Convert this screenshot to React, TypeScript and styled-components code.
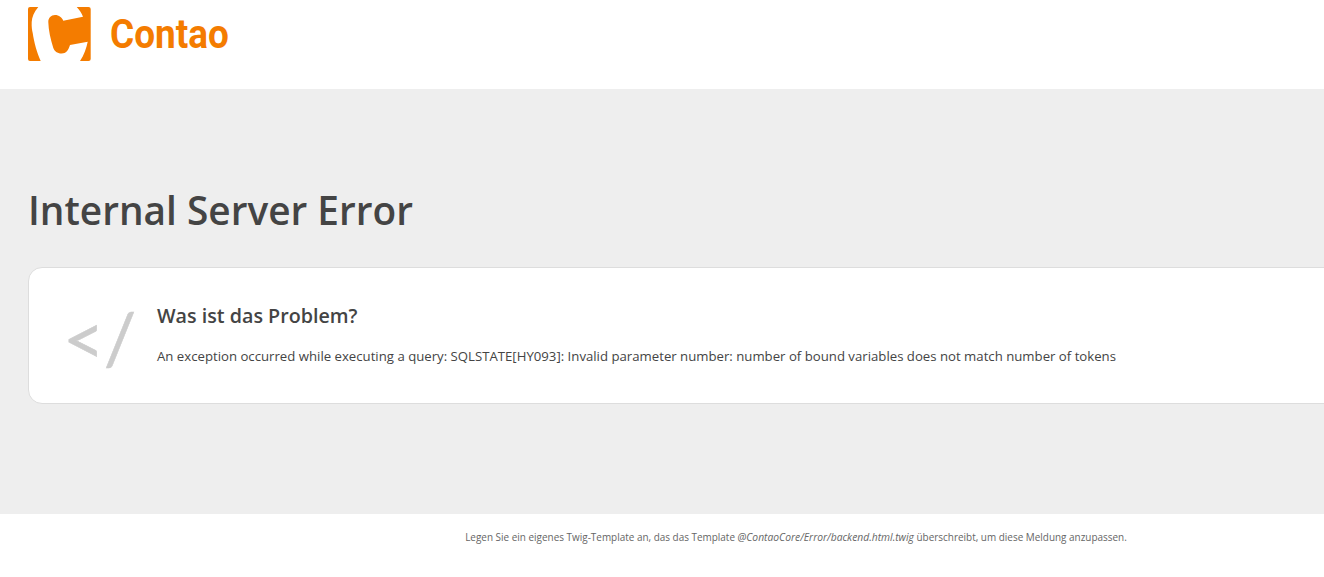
import { createGlobalStyle } from "styled-components";
import styled from "styled-components";

const GlobalStyle = createGlobalStyle`
    html, body {
        margin: 0;
        padding: 0;
        background: #fff;
        overflow: hidden;
    }
`;

const Page = styled.div`
    width: 1592px;
    height: 577px;
    font-family: "Open Sans", "Liberation Sans", sans-serif;
    color: #444;
`;
const Header = styled.header`
    height: 89px;
    display: flex;
    align-items: flex-start;
    gap: 18px;
    padding: 6px 0 0 27px;
    box-sizing: border-box;
`;
const LogoMark = styled.svg`
    width: 65px;
    height: 57px;
    flex: none;
`;
const LogoText = styled.span`
    font-family: "Roboto", sans-serif;
    font-weight: 700;
    font-size: 41px;
    line-height: 57px;
    color: #f47c00;
    display: inline-block;
    transform: scaleX(0.9);
    transform-origin: left center;
`;
const Main = styled.main`
    height: 425px;
    background: #eee;
    padding: 93px 28px 0;
    box-sizing: border-box;
`;
const Title = styled.h1`
    margin: 0 0 28px;
    font-size: 38.8px;
    font-weight: 600;
    line-height: 57px;
    color: #444;
`;
const Card = styled.section`
    height: 137px;
    box-sizing: border-box;
    display: flex;
    align-items: flex-start;
    background: #fff;
    border: 1px solid #ddd;
    border-radius: 14px;
`;
const CodeGlyph = styled.div`
    width: 128px;
    flex: none;
    padding: 25px 0 0 34px;
    box-sizing: border-box;
    font-family: "Lato", sans-serif;
    font-size: 72px;
    line-height: 88px;
    letter-spacing: -1px;
    color: #ccc;
    -webkit-text-stroke: 0.5px #ccc;
    white-space: nowrap;
`;
const CardBody = styled.div`
    padding-top: 34px;
`;
const CardTitle = styled.h2`
    margin: 0 0 17px;
    font-size: 19.7px;
    font-weight: 600;
    line-height: 28px;
    color: #444;
`;
const Message = styled.p`
    margin: 0;
    font-size: 13.2px;
    line-height: 18px;
    color: #444;
`;
const Footer = styled.footer`
    padding-top: 15px;
    text-align: center;
    font-size: 9.95px;
    line-height: 16px;
    color: #666;
    em {
        font-size: 10.3px;
    }
`;

export default function App() {
    return (
        <Page>
            <GlobalStyle />
            <Header>
                <LogoMark viewBox="27 6 65 57" aria-hidden="true">
                    <path
                        fill="#f47c00"
                        d="M30 7H38.3C34 12 32 17 31.7 22C31.5 27 32 30 32.7 33C34 42 37 53 40.7 61H30Q28 61 28 59V9Q28 7 30 7Z"
                    />
                    <path
                        fill="#f47c00"
                        d="M76.7 7H88.5Q90.7 7 90.7 9V59Q90.7 61 88.5 61H80C84 55 86.5 48 87.7 41.7L70 45C68.5 50 66 53.5 61.7 53.5C57 53.5 54.5 51 53.3 48C50.5 39 48.5 30 48.3 22C48.3 18 51 15 55 15C59 15 62 17.5 63.3 20.7L83 16.7C81.5 13 79.5 10 76.7 7Z"
                    />
                </LogoMark>
                <LogoText>Contao</LogoText>
            </Header>
            <Main>
                <Title>Internal Server Error</Title>
                <Card>
                    <CodeGlyph>&lt;/</CodeGlyph>
                    <CardBody>
                        <CardTitle>Was ist das Problem?</CardTitle>
                        <Message>
                            An exception occurred while executing a query: SQLSTATE[HY093]: Invalid parameter number: number of bound variables does not match number of tokens
                        </Message>
                    </CardBody>
                </Card>
            </Main>
            <Footer>
                Legen Sie ein eigenes Twig-Template an, das das Template <em>@ContaoCore/Error/backend.html.twig</em> überschreibt, um diese Meldung anzupassen.
            </Footer>
        </Page>
    );
}
